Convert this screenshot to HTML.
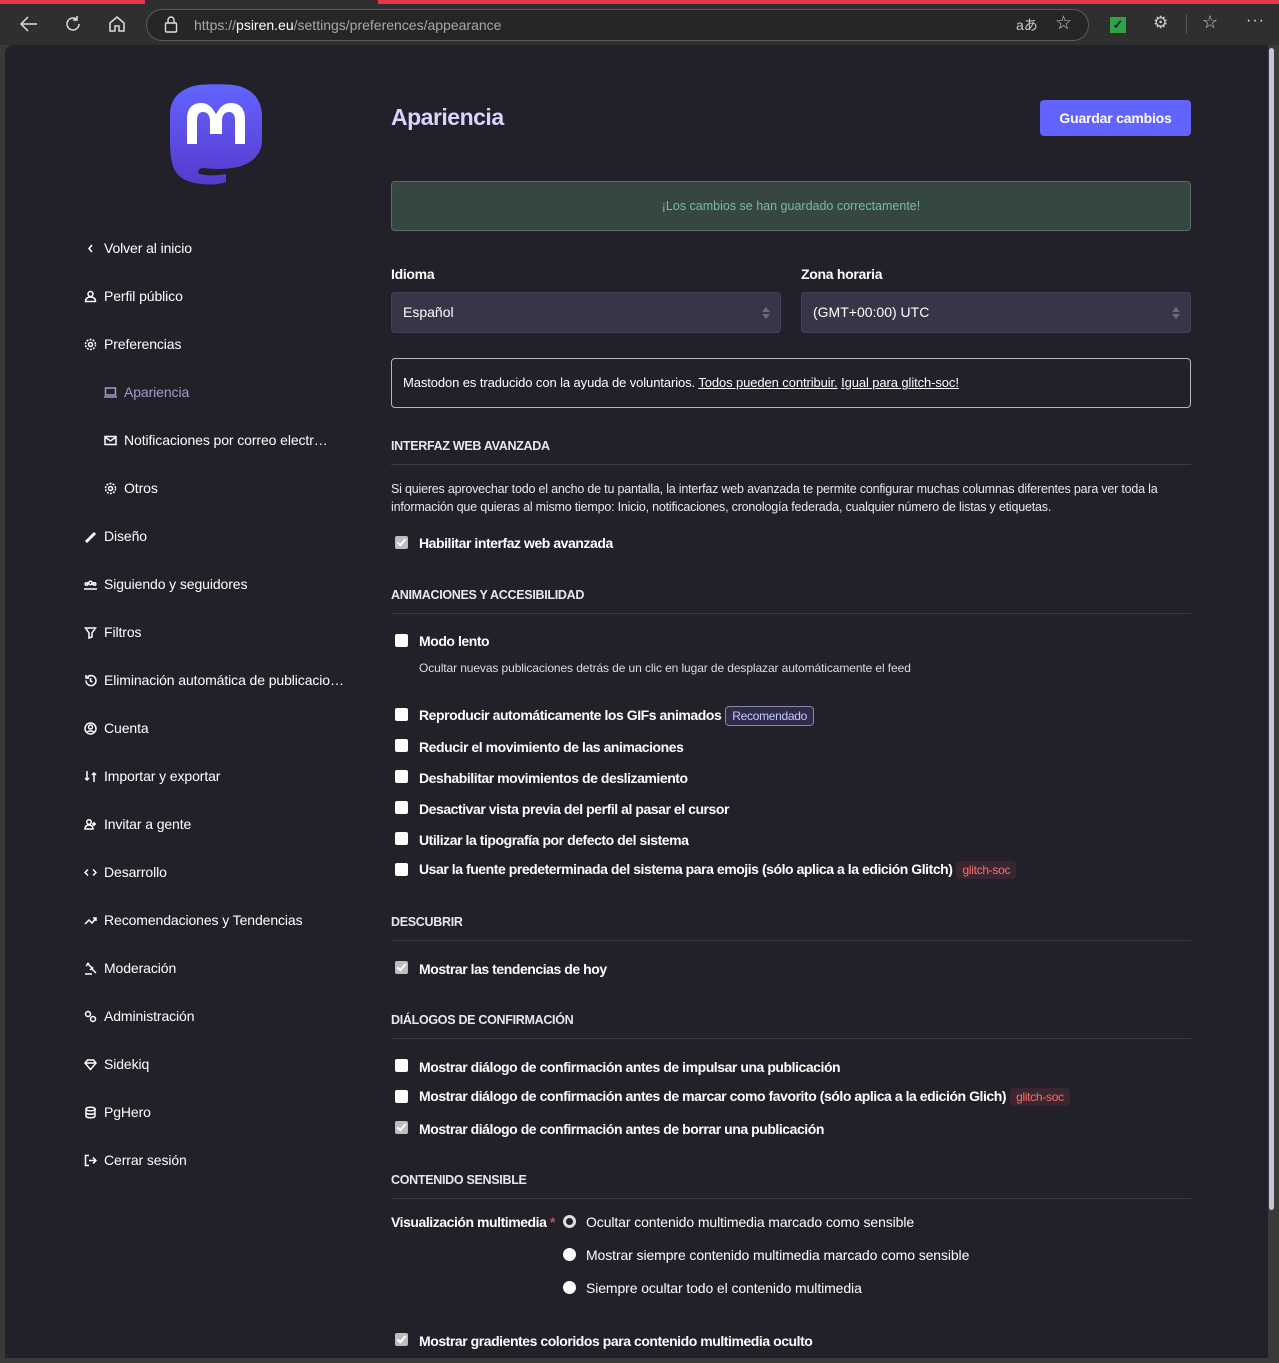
<!DOCTYPE html>
<html><head><meta charset="utf-8"><style>
*{box-sizing:border-box;margin:0;padding:0}
body{width:1279px;height:1363px;background:#3a3a3a;font-family:"Liberation Sans",sans-serif;overflow:hidden;position:relative;color:#fff}
.abs{position:absolute}
.top{left:0;top:0;width:1279px;height:45px;background:#2f2f2f}
.red1{left:0;top:0;width:145px;height:4px;background:#e8364a}
.red2{left:378px;top:0;width:901px;height:4px;background:#e8364a}
.url{left:146px;top:9px;width:943px;height:32px;border:1px solid #5a5a5a;border-radius:16px;background:#262626;font-size:14px;color:#a8a8a8;line-height:30px;padding-left:47px}
.url b{color:#fff;font-weight:normal}
.page{left:5px;top:45px;width:1263px;height:1313px;background:#222029;border-radius:8px 0 0 0}
.sb{left:1269px;top:48px;width:5px;height:1162px;background:#c9c3d8;border-radius:3px}
.nav{position:absolute;left:84px;font-size:14px;color:#fff;display:flex;align-items:center;gap:7px;height:20px;letter-spacing:-.1px}
.nav svg{width:13px;height:13px;stroke:#fff;fill:none;stroke-width:1.5}
.h{position:absolute;left:391px;font-size:12.5px;font-weight:bold;color:#e8e6f0;letter-spacing:-.3px}
.hr{position:absolute;left:391px;width:800px;height:1px;background:#3b3948}
.cb{position:absolute;left:395px;width:13px;height:13px;background:#fff;border-radius:2px}
.cb.on{background:#bdbdbd}
.cb.on:after{content:"";position:absolute;left:4px;top:1px;width:3px;height:7px;border:solid #fff;border-width:0 2px 2px 0;transform:rotate(40deg)}
.lb{position:absolute;left:419px;font-size:14px;font-weight:bold;color:#fff;letter-spacing:-.45px;white-space:nowrap}
.tag{display:inline-block;font-size:12px;font-weight:normal;padding:2px 6px;border-radius:4px;margin-left:4px;letter-spacing:-.3px}
.rec{border:1px solid #8a86a0;color:#c8c9ff;background:#2e2c48}
.gs{color:#ff6b6b;background:#3a2630}
.rd{position:absolute;left:563px;width:13px;height:13px;border-radius:50%;background:#fff}
.rt{position:absolute;left:586px;font-size:14px;color:#fff;letter-spacing:-.1px}
.sel{position:absolute;top:292px;height:41px;background:#393447;border:1px solid #44405a;border-radius:4px;font-size:14px;line-height:39px;padding-left:11px;color:#fff}
.sel:after{content:"";position:absolute;right:10px;top:14px;border:4px solid transparent;border-bottom:5px solid #6d6880;border-top:none}
.sel:before{content:"";position:absolute;right:10px;top:21px;border:4px solid transparent;border-top:5px solid #6d6880;border-bottom:none}
</style></head><body>
<div class="abs top"></div><div class="abs red1"></div><div class="abs red2"></div>
<svg class="abs" style="left:19px;top:15px" width="20" height="18" viewBox="0 0 20 18" fill="none" stroke="#ddd" stroke-width="1.5"><path d="M18 9H3M9 2L2 9l7 7"/></svg>
<svg class="abs" style="left:64px;top:15px" width="18" height="18" viewBox="0 0 18 18" fill="none" stroke="#ddd" stroke-width="1.5"><path d="M15 9a6 6 0 1 1-2-4.5M13 1v4h-4"/></svg>
<svg class="abs" style="left:108px;top:15px" width="18" height="18" viewBox="0 0 18 18" fill="none" stroke="#ddd" stroke-width="1.5"><path d="M2 8l7-6 7 6v8h-5v-5H7v5H2z"/></svg>
<div class="abs url">https://<b>psiren.eu</b>/settings/preferences/appearance</div>
<svg class="abs" style="left:164px;top:16px" width="14" height="17" viewBox="0 0 14 17" fill="none" stroke="#ddd" stroke-width="1.4"><rect x="1.5" y="7" width="11" height="9" rx="1"/><path d="M4 7V4a3 3 0 0 1 6 0v3"/></svg>
<div class="abs" style="left:1016px;top:15px;font-size:14px;color:#ccc">aあ</div>
<div class="abs" style="left:1055px;top:12px;font-size:19px;color:#ccc">☆</div>
<div class="abs" style="left:1110px;top:17px;width:16px;height:16px;background:#2fa34a;color:#123;font-size:13px;line-height:16px;text-align:center;font-weight:bold">✓</div>
<div class="abs" style="left:1153px;top:13px;font-size:17px;color:#ccc">⚙</div>
<div class="abs" style="left:1186px;top:14px;width:1px;height:20px;background:#555"></div>
<div class="abs" style="left:1202px;top:12px;font-size:18px;color:#ccc">☆</div>
<div class="abs" style="left:1246px;top:12px;font-size:16px;color:#ddd;letter-spacing:1px">···</div>
<div class="abs page"></div>
<div class="abs sb"></div>

<svg class="abs" style="left:169px;top:84px" width="95" height="102" viewBox="0 0 95 102"><defs><linearGradient id="g" x1="0" y1="0" x2="0" y2="1"><stop offset="0" stop-color="#6364ff"/><stop offset="1" stop-color="#563acc"/></linearGradient></defs><path d="M93 32C93 14 81 3 64 1 57 0 38 0 30 1 14 3 1 13 1 30v26c0 25 4 36 18 41 10 4 28 5 38 1v-8c-10 2-22 2-28-1 0-3 2-5 6-5 14 2 30 1 40-3 12-5 18-14 18-25z" fill="url(#g)"/><path d="M76 60V35c0-10-5-16-14-16-6 0-10 3-13 8l-2 3-2-3c-3-5-7-8-13-8-9 0-14 6-14 16v25h10V36c0-5 2-8 6-8s7 3 7 9v13h12V37c0-6 3-9 7-9s6 3 6 8v24z" fill="#fff"/></svg>

<div class="nav" style="top:238px"><svg viewBox="0 0 13 13"><path d="M8 3L5 6.5 8 10"/></svg>Volver al inicio</div>
<div class="nav" style="top:286px"><svg viewBox="0 0 13 13"><circle cx="6.5" cy="4" r="2.5"/><path d="M1.5 11.5h10c0-3-2-4.5-5-4.5s-5 1.5-5 4.5z"/></svg>Perfil público</div>
<div class="nav" style="top:334px"><svg viewBox="0 0 13 13"><circle cx="6.5" cy="6.5" r="2"/><circle cx="6.5" cy="6.5" r="5" stroke-dasharray="2 1.2"/></svg>Preferencias</div>
<div class="nav" style="top:382px;left:104px;color:#a09ccb"><svg viewBox="0 0 13 13" style="stroke:#a09ccb"><rect x="1.5" y="2" width="10" height="7"/><path d="M0 11h13"/></svg>Apariencia</div>
<div class="nav" style="top:430px;left:104px"><svg viewBox="0 0 13 13"><rect x="1" y="2.5" width="11" height="8"/><path d="M1 3l5.5 4 5.5-4"/></svg>Notificaciones por correo electr…</div>
<div class="nav" style="top:478px;left:104px"><svg viewBox="0 0 13 13"><circle cx="6.5" cy="6.5" r="2"/><circle cx="6.5" cy="6.5" r="5" stroke-dasharray="2 1.2"/></svg>Otros</div>
<div class="nav" style="top:526px"><svg viewBox="0 0 13 13"><path d="M2 11l8-8 1 1-8 8z"/></svg>Diseño</div>
<div class="nav" style="top:574px"><svg viewBox="0 0 13 13"><circle cx="6.5" cy="5" r="1.7"/><circle cx="2.5" cy="6" r="1.3"/><circle cx="10.5" cy="6" r="1.3"/><path d="M0 11h13"/></svg>Siguiendo y seguidores</div>
<div class="nav" style="top:622px"><svg viewBox="0 0 13 13"><path d="M1.5 2h10L8 7v4L5 12V7z"/></svg>Filtros</div>
<div class="nav" style="top:670px"><svg viewBox="0 0 13 13"><path d="M2 6.5a5 5 0 1 0 1.5-3.5M2 1v3h3M6.5 4v3l2 1"/></svg>Eliminación automática de publicacio…</div>
<div class="nav" style="top:718px"><svg viewBox="0 0 13 13"><circle cx="6.5" cy="6.5" r="5.5"/><circle cx="6.5" cy="5" r="2"/><path d="M3 10.5c1-2 6-2 7 0"/></svg>Cuenta</div>
<div class="nav" style="top:766px"><svg viewBox="0 0 13 13"><path d="M3 1v9M1 8l2 2 2-2M10 12V3M8 5l2-2 2 2"/></svg>Importar y exportar</div>
<div class="nav" style="top:814px"><svg viewBox="0 0 13 13"><circle cx="5" cy="4" r="2.3"/><path d="M1 11c0-3 2-4 4-4s4 1 4 4zM10 4v4M8 6h4"/></svg>Invitar a gente</div>
<div class="nav" style="top:862px"><svg viewBox="0 0 13 13"><path d="M4 3.5L1 6.5l3 3M9 3.5l3 3-3 3"/></svg>Desarrollo</div>
<div class="nav" style="top:910px"><svg viewBox="0 0 13 13"><path d="M1 10l4-4 3 3 4-5M9 4h3v3"/></svg>Recomendaciones y Tendencias</div>
<div class="nav" style="top:958px"><svg viewBox="0 0 13 13"><path d="M3 1l6 6M2 4l3-3M6 8l3-3M7 6l5 5M1 12h7"/></svg>Moderación</div>
<div class="nav" style="top:1006px"><svg viewBox="0 0 13 13"><circle cx="4" cy="4" r="2.5"/><circle cx="9" cy="9" r="2.5"/></svg>Administración</div>
<div class="nav" style="top:1054px"><svg viewBox="0 0 13 13"><path d="M1 5l2.5-3h6L12 5l-5.5 6.5zM1 5h11"/></svg>Sidekiq</div>
<div class="nav" style="top:1102px"><svg viewBox="0 0 13 13"><ellipse cx="6.5" cy="3" rx="4.5" ry="1.8"/><path d="M2 3v7c0 2.4 9 2.4 9 0V3M2 6.5c0 2.4 9 2.4 9 0"/></svg>PgHero</div>
<div class="nav" style="top:1150px"><svg viewBox="0 0 13 13"><path d="M5 1.5H1.5v10H5M5 6.5h7M9 3.5l3 3-3 3"/></svg>Cerrar sesión</div>

<div class="abs" style="left:391px;top:104px;font-size:23px;font-weight:bold;color:#d9d4ff;letter-spacing:-.5px">Apariencia</div>
<div class="abs" style="left:1040px;top:100px;width:151px;height:36px;background:#6364ff;border-radius:4px;font-size:14px;font-weight:bold;text-align:center;line-height:36px;letter-spacing:-.2px">Guardar cambios</div>
<div class="abs" style="left:391px;top:181px;width:800px;height:50px;background:#364640;border:1px solid #527264;border-radius:4px;font-size:12.5px;color:#79bd9a;text-align:center;line-height:48px">¡Los cambios se han guardado correctamente!</div>
<div class="abs" style="left:391px;top:266px;font-size:14px;font-weight:bold;letter-spacing:-.3px">Idioma</div>
<div class="abs" style="left:801px;top:266px;font-size:14px;font-weight:bold;letter-spacing:-.3px">Zona horaria</div>
<div class="sel" style="left:391px;width:390px">Español</div>
<div class="sel" style="left:801px;width:390px">(GMT+00:00) UTC</div>
<div class="abs" style="left:391px;top:358px;width:800px;height:50px;border:1px solid #b8b3cc;border-radius:4px;font-size:13px;line-height:48px;padding-left:11px;letter-spacing:-.1px">Mastodon es traducido con la ayuda de voluntarios. <u>Todos pueden contribuir.</u> <u>Igual para glitch-soc!</u></div>

<div class="h" style="top:439px">INTERFAZ WEB AVANZADA</div><div class="hr" style="top:464px"></div>
<div class="abs" style="left:391px;top:480px;width:785px;font-size:12.5px;line-height:18px;color:#e8e6f0;letter-spacing:-.2px">Si quieres aprovechar todo el ancho de tu pantalla, la interfaz web avanzada te permite configurar muchas columnas diferentes para ver toda la información que quieras al mismo tiempo: Inicio, notificaciones, cronología federada, cualquier número de listas y etiquetas.</div>
<div class="cb on" style="top:536px"></div><div class="lb" style="top:535px">Habilitar interfaz web avanzada</div>

<div class="h" style="top:588px">ANIMACIONES Y ACCESIBILIDAD</div><div class="hr" style="top:613px"></div>
<div class="cb" style="top:634px"></div><div class="lb" style="top:633px">Modo lento</div>
<div class="abs" style="left:419px;top:661px;font-size:12px;color:#ddd;letter-spacing:-.1px">Ocultar nuevas publicaciones detrás de un clic en lugar de desplazar automáticamente el feed</div>
<div class="cb" style="top:708px"></div><div class="lb" style="top:706px">Reproducir automáticamente los GIFs animados<span class="tag rec">Recomendado</span></div>
<div class="cb" style="top:739px"></div><div class="lb" style="top:739px">Reducir el movimiento de las animaciones</div>
<div class="cb" style="top:770px"></div><div class="lb" style="top:770px">Deshabilitar movimientos de deslizamiento</div>
<div class="cb" style="top:801px"></div><div class="lb" style="top:801px">Desactivar vista previa del perfil al pasar el cursor</div>
<div class="cb" style="top:832px"></div><div class="lb" style="top:832px">Utilizar la tipografía por defecto del sistema</div>
<div class="cb" style="top:863px"></div><div class="lb" style="top:861px">Usar la fuente predeterminada del sistema para emojis (sólo aplica a la edición Glitch)<span class="tag gs">glitch-soc</span></div>

<div class="h" style="top:915px">DESCUBRIR</div><div class="hr" style="top:940px"></div>
<div class="cb on" style="top:961px"></div><div class="lb" style="top:961px">Mostrar las tendencias de hoy</div>

<div class="h" style="top:1013px">DIÁLOGOS DE CONFIRMACIÓN</div><div class="hr" style="top:1038px"></div>
<div class="cb" style="top:1059px"></div><div class="lb" style="top:1059px">Mostrar diálogo de confirmación antes de impulsar una publicación</div>
<div class="cb" style="top:1090px"></div><div class="lb" style="top:1088px">Mostrar diálogo de confirmación antes de marcar como favorito (sólo aplica a la edición Glich)<span class="tag gs">glitch-soc</span></div>
<div class="cb on" style="top:1121px"></div><div class="lb" style="top:1121px">Mostrar diálogo de confirmación antes de borrar una publicación</div>

<div class="h" style="top:1173px">CONTENIDO SENSIBLE</div><div class="hr" style="top:1198px"></div>
<div class="lb" style="left:391px;top:1214px">Visualización multimedia <span style="color:#df405a">*</span></div>
<div class="rd" style="top:1215px;background:#222029;border:3px solid #ddd"></div><div class="rt" style="top:1214px">Ocultar contenido multimedia marcado como sensible</div>
<div class="rd" style="top:1248px"></div><div class="rt" style="top:1247px">Mostrar siempre contenido multimedia marcado como sensible</div>
<div class="rd" style="top:1281px"></div><div class="rt" style="top:1280px">Siempre ocultar todo el contenido multimedia</div>
<div class="cb on" style="top:1333px"></div><div class="lb" style="top:1333px">Mostrar gradientes coloridos para contenido multimedia oculto</div>
</body></html>
